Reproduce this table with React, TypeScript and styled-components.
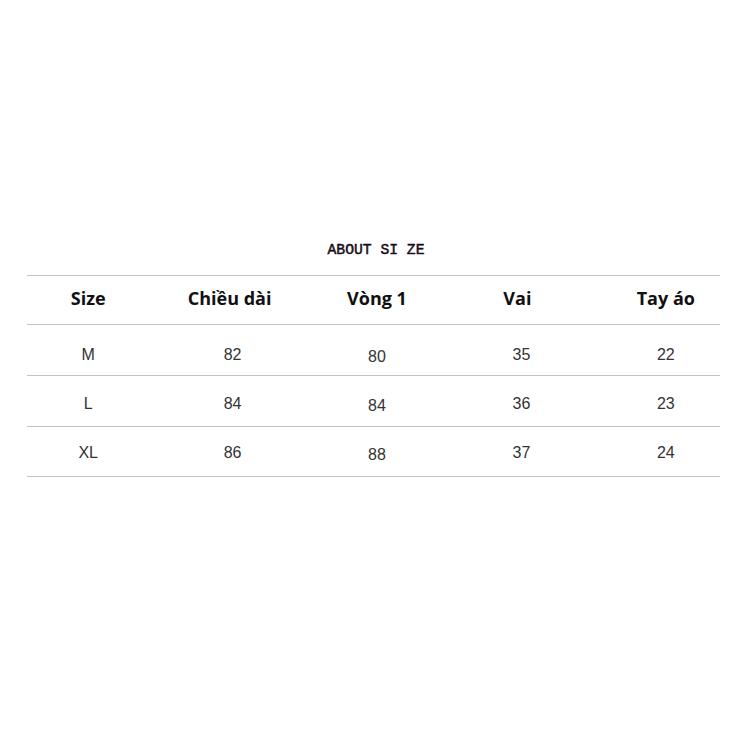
import React from 'react'
import styled, { createGlobalStyle } from 'styled-components'

const rows = [
  { cells: ['M', '82', '80', '35', '22'], pad: 21, h: 50 },
  { cells: ['L', '84', '84', '36', '23'], pad: 19, h: 50 },
  { cells: ['XL', '86', '88', '37', '24'], pad: 17, h: 49 },
]

const heads = ['Size', 'Chiều dài', 'Vòng 1', 'Vai', 'Tay áo']

export default function App() {
  return (
    <>
      <Global />
      <Page>
        <Title>ABOUT SI ZE</Title>
        <Table>
          <HeadRow>
            <Cols>
              {heads.map((h) => (
                <HeadCell key={h}>{h}</HeadCell>
              ))}
            </Cols>
          </HeadRow>
          {rows.map((r) => (
            <DataRow key={r.cells[0]} h={r.h}>
              <Cols>
                {r.cells.map((v, i) => (
                  <DataCell key={i} pad={i === 2 ? r.pad + 2 : r.pad}>
                    {v}
                  </DataCell>
                ))}
              </Cols>
            </DataRow>
          ))}
        </Table>
      </Page>
    </>
  )
}

const Global = createGlobalStyle`
  html, body {
    margin: 0;
    background: #fff;
  }
`

const Page = styled.div`
  width: 750px;
  height: 750px;
  padding-top: 240px;
  box-sizing: border-box;
`

const Title = styled.div`
  height: 20px;
  line-height: 20px;
  text-align: center;
  padding-left: 2px;
  font-family: 'Liberation Mono', monospace;
  font-size: 14.7px;
  color: #1a0d1a;
  -webkit-text-stroke: 0.5px #1a0d1a;
  margin-bottom: 15px;
`

const Table = styled.div`
  margin-left: 27px;
  width: 693px;
  border-top: 1px solid #c4c4c4;
`

const Cols = styled.div`
  display: grid;
  grid-template-columns: repeat(5, 1fr);
  margin: 0 -18px 0 -11px;
  height: 100%;
`

const HeadRow = styled.div`
  height: 48px;
  border-bottom: 1px solid #c4c4c4;
`

const DataRow = styled.div<{ h: number }>`
  height: ${({ h }) => h}px;
  border-bottom: 1px solid #c4c4c4;
`

const HeadCell = styled.div`
  display: flex;
  align-items: center;
  justify-content: center;
  padding-bottom: 4px;
  font-family: 'Open Sans', sans-serif;
  font-weight: 700;
  font-size: 18px;
  color: #111;

  &:nth-child(2) {
    padding-right: 6px;
  }
  &:nth-child(4) {
    padding-right: 8px;
  }
`

const DataCell = styled.div<{ pad: number }>`
  display: flex;
  align-items: flex-start;
  justify-content: center;
  padding-top: ${({ pad }) => pad}px;
  font-family: 'Liberation Sans', Arial, sans-serif;
  font-size: 16px;
  line-height: 18px;
  color: #333;
`
